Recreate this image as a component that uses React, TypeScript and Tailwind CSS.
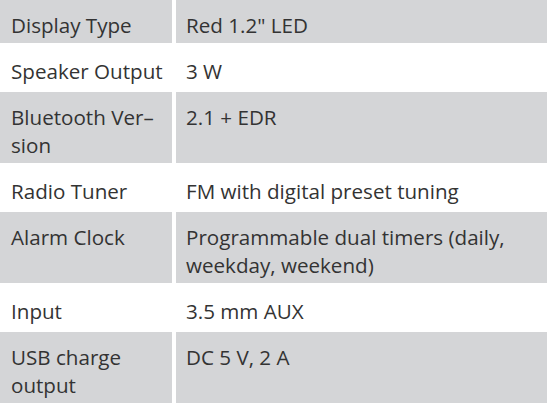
const rows: { k: React.ReactNode; v: React.ReactNode; gray: boolean }[] = [
  { k: 'Display Type', v: 'Red 1.2" LED', gray: true },
  { k: 'Speaker Output', v: '3 W', gray: false },
  { k: <>Bluetooth Ver–<br />sion</>, v: '2.1 + EDR', gray: true },
  { k: 'Radio Tuner', v: 'FM with digital preset tuning', gray: false },
  { k: 'Alarm Clock', v: 'Programmable dual timers (daily, weekday, weekend)', gray: true },
  { k: 'Input', v: '3.5 mm AUX', gray: false },
  { k: <>USB charge<br />output</>, v: 'DC 5 V, 2 A', gray: true },
];

export default function App() {
  return (
    <div className="w-[550px] h-[412px] bg-white">
      <div
        className="grid grid-cols-[172px_371px] gap-x-[4px] gap-y-[3px] text-[20.6px] leading-[28px] text-[#333333]"
        style={{ fontFamily: '"Open Sans", sans-serif' }}
      >
        {rows.map((r, i) => (
          <div key={i} className="contents">
            <div className={`pl-[11px] pr-[6px] pt-[11px] pb-[4px] ${r.gray ? 'bg-[#d4d5d7]' : 'bg-white'}`}>{r.k}</div>
            <div className={`pl-[10px] pr-[8px] pt-[11px] pb-[4px] ${r.gray ? 'bg-[#d4d5d7]' : 'bg-white'}`}>{r.v}</div>
          </div>
        ))}
      </div>
    </div>
  );
}
